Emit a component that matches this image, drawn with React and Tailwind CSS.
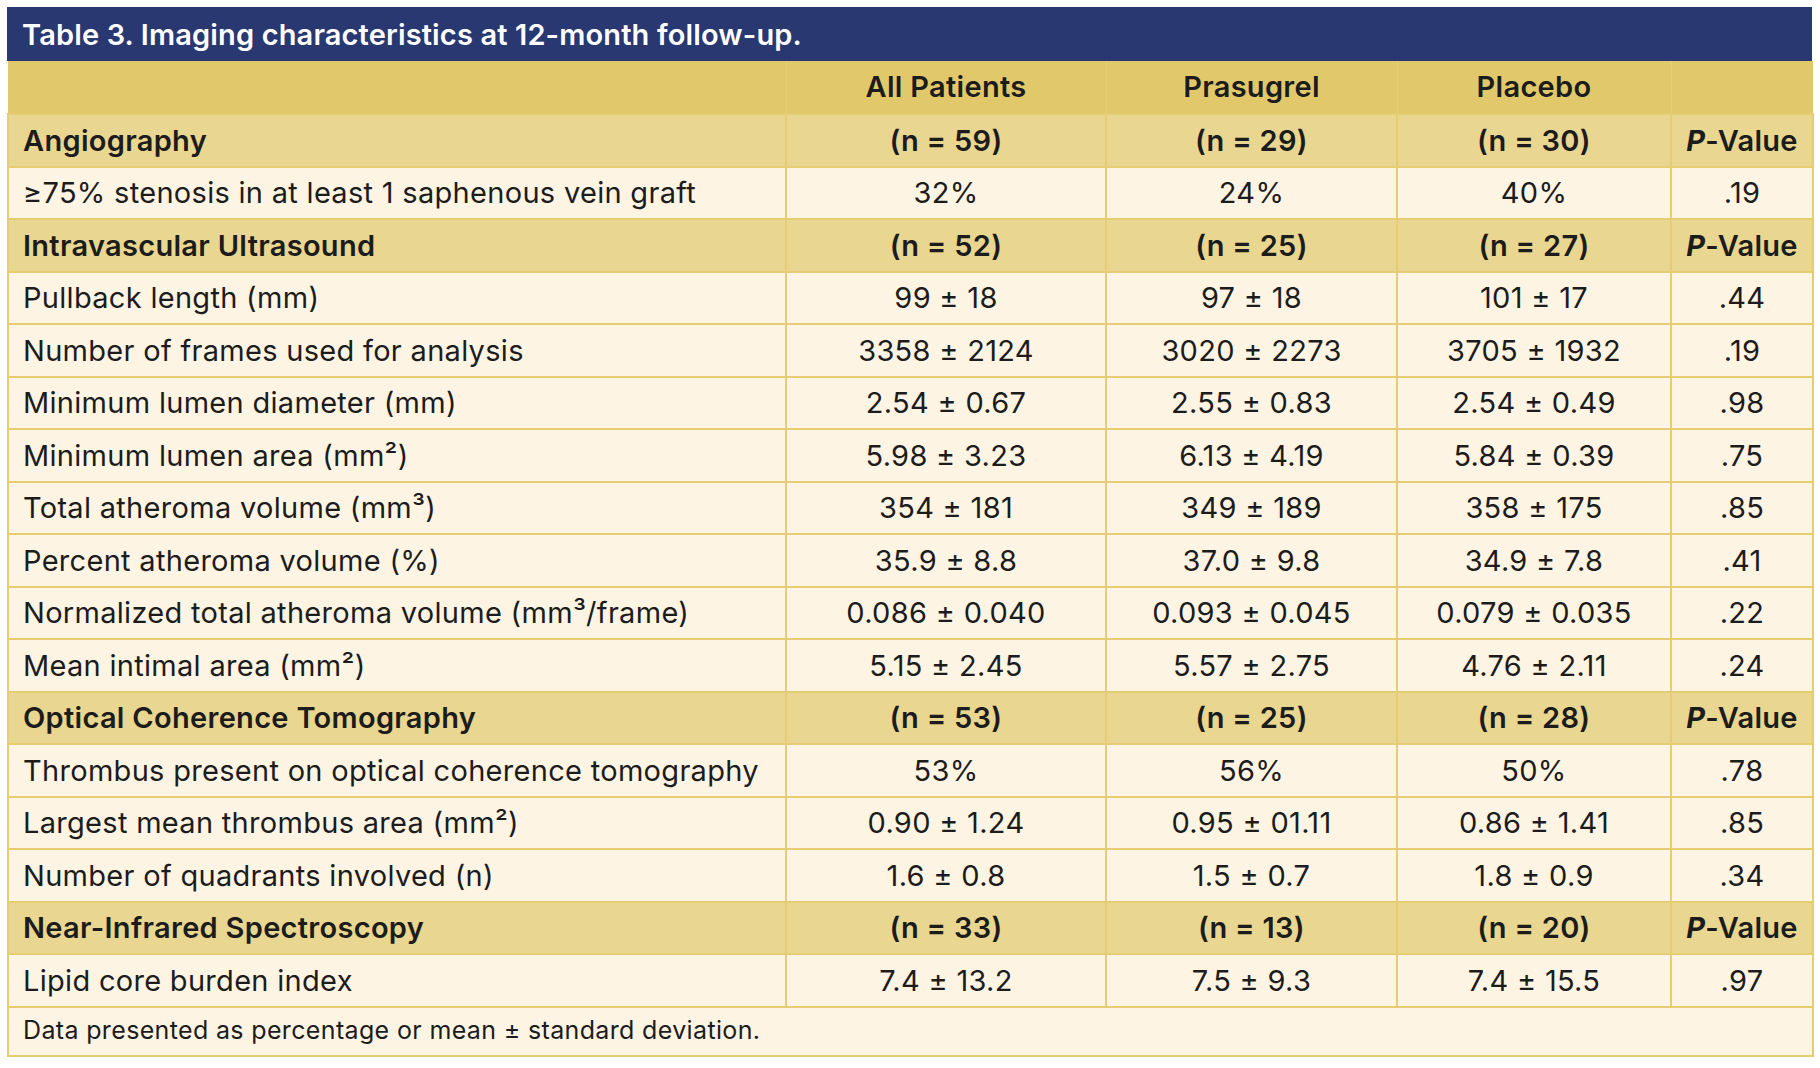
const sections = [
  {
    title: "Angiography",
    n: ["(n = 59)", "(n = 29)", "(n = 30)"],
    rows: [["≥75% stenosis in at least 1 saphenous vein graft", "32%", "24%", "40%", ".19"]],
  },
  {
    title: "Intravascular Ultrasound",
    n: ["(n = 52)", "(n = 25)", "(n = 27)"],
    rows: [
      ["Pullback length (mm)", "99 ± 18", "97 ± 18", "101 ± 17", ".44"],
      ["Number of frames used for analysis", "3358 ± 2124", "3020 ± 2273", "3705 ± 1932", ".19"],
      ["Minimum lumen diameter (mm)", "2.54 ± 0.67", "2.55 ± 0.83", "2.54 ± 0.49", ".98"],
      ["Minimum lumen area (mm²)", "5.98 ± 3.23", "6.13 ± 4.19", "5.84 ± 0.39", ".75"],
      ["Total atheroma volume (mm³)", "354 ± 181", "349 ± 189", "358 ± 175", ".85"],
      ["Percent atheroma volume (%)", "35.9 ± 8.8", "37.0 ± 9.8", "34.9 ± 7.8", ".41"],
      ["Normalized total atheroma volume (mm³/frame)", "0.086 ± 0.040", "0.093 ± 0.045", "0.079 ± 0.035", ".22"],
      ["Mean intimal area (mm²)", "5.15 ± 2.45", "5.57 ± 2.75", "4.76 ± 2.11", ".24"],
    ],
  },
  {
    title: "Optical Coherence Tomography",
    n: ["(n = 53)", "(n = 25)", "(n = 28)"],
    rows: [
      ["Thrombus present on optical coherence tomography", "53%", "56%", "50%", ".78"],
      ["Largest mean thrombus area (mm²)", "0.90 ± 1.24", "0.95 ± 01.11", "0.86 ± 1.41", ".85"],
      ["Number of quadrants involved (n)", "1.6 ± 0.8", "1.5 ± 0.7", "1.8 ± 0.9", ".34"],
    ],
  },
  {
    title: "Near-Infrared Spectroscopy",
    n: ["(n = 33)", "(n = 13)", "(n = 20)"],
    rows: [["Lipid core burden index", "7.4 ± 13.2", "7.5 ± 9.3", "7.4 ± 15.5", ".97"]],
  },
];

const cell = "border-2 border-[#e6cd72] h-[52.5px] p-0";

const PValue = () => (
  <span>
    <span className="italic font-bold">P</span>-Value
  </span>
);

export default function App() {
  return (
    <div className="bg-white min-h-[1068px] pt-[7px] pl-[7px] font-['Inter',sans-serif] text-[#1c1c1c]">
      <div className="w-[1805px]">
        <div className="bg-[#293870] h-[54px] flex items-center pl-[15px] pt-[2px]">
          <h1 className="text-white text-[29px] font-semibold tracking-[0.14px]">
            Table 3. Imaging characteristics at 12-month follow-up.
          </h1>
        </div>
        <table className="w-[1805px] table-fixed border-collapse text-[29px] tracking-[0.3px]">
          <colgroup>
            <col className="w-[778px]" />
            <col className="w-[320px]" />
            <col className="w-[291px]" />
            <col className="w-[274px]" />
            <col className="w-[142px]" />
          </colgroup>
          <thead>
            <tr className="bg-[#e1c96b] font-semibold h-[53px]">
              <th className="border-x border-[#e4ce77] border-l-0"></th>
              <th className="border-x border-[#e4ce77] text-center font-semibold">All Patients</th>
              <th className="border-x border-[#e4ce77] text-center font-semibold">Prasugrel</th>
              <th className="border-x border-[#e4ce77] text-center font-semibold">Placebo</th>
              <th className="border-x border-[#e4ce77] border-r-0"></th>
            </tr>
          </thead>
          <tbody>
            {sections.map((s) => (
              <>
                <tr key={s.title} className="bg-[#e9d690] font-semibold">
                  <td className={`${cell} text-left pl-[14px]`}>{s.title}</td>
                  {s.n.map((n, i) => (
                    <td key={i} className={`${cell} text-center`}>{n}</td>
                  ))}
                  <td className={`${cell} text-center`}>
                    <PValue />
                  </td>
                </tr>
                {s.rows.map((r) => (
                  <tr key={r[0]} className="bg-[#fef4e3]">
                    <td className={`${cell} text-left pl-[14px]`}>{r[0]}</td>
                    {r.slice(1).map((v, i) => (
                      <td key={i} className={`${cell} text-center`}>{v}</td>
                    ))}
                  </tr>
                ))}
              </>
            ))}
            <tr className="bg-[#fef4e3]">
              <td colSpan={5} className="border-2 border-[#e6cd72] h-[49px] pl-[14px] text-[25px] tracking-[0.35px]">
                Data presented as percentage or mean ± standard deviation.
              </td>
            </tr>
          </tbody>
        </table>
      </div>
    </div>
  );
}
